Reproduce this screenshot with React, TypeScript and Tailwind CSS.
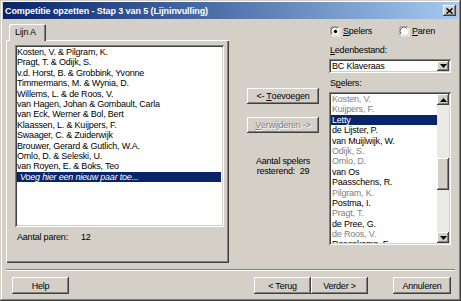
import React from "react";

const raised =
  "shadow-[inset_-1px_-1px_#404040,inset_1px_1px_#ffffff,inset_-2px_-2px_#808080,inset_2px_2px_#d4d0c8]";
const sunken =
  "shadow-[inset_1px_1px_#808080,inset_-1px_-1px_#ffffff,inset_2px_2px_#404040,inset_-2px_-2px_#d4d0c8]";

function Radio({ checked }: { checked: boolean }) {
  return (
    <svg width="11" height="11" viewBox="0 0 12 12" className="shrink-0">
      <circle cx="6" cy="6" r="5.5" fill="#ffffff" />
      <path d="M1.2 9.5 A5.5 5.5 0 0 1 9.5 1.2" stroke="#808080" strokeWidth="1" fill="none" />
      <path d="M2.4 8.6 A4.3 4.3 0 0 1 8.6 2.4" stroke="#404040" strokeWidth="1" fill="none" />
      <path d="M10.8 2.5 A5.5 5.5 0 0 1 2.5 10.8" stroke="#ffffff" strokeWidth="1" fill="none" />
      <path d="M9.6 3.4 A4.3 4.3 0 0 1 3.4 9.6" stroke="#d4d0c8" strokeWidth="1" fill="none" />
      {checked && <circle cx="6" cy="6" r="1.8" fill="#000000" />}
    </svg>
  );
}

function Btn({ children, className = "", disabled = false }: { children: React.ReactNode; className?: string; disabled?: boolean }) {
  return (
    <div
      className={`${raised} bg-[#d4d0c8] flex items-center justify-center ${
        disabled ? "text-[#808080] [text-shadow:1px_1px_0_#ffffff]" : "text-black"
      } ${className}`}
    >
      {children}
    </div>
  );
}

const pairs = [
  "Kosten, V. & Pilgram, K.",
  "Pragt, T. & Odijk, S.",
  "v.d. Horst, B. & Grobbink, Yvonne",
  "Timmermans, M. & Wynia, D.",
  "Willems, L. & de Roos, V.",
  "van Hagen, Johan & Gombault, Carla",
  "van Eck, Werner & Bol, Bert",
  "Klaassen, L. & Kuijpers, F.",
  "Swaager, C. & Zuiderwijk",
  "Brouwer, Gerard & Gutlich, W.A.",
  "Omlo, D. & Seleski, U.",
  "van Royen, E. & Boks, Teo",
];

const players: { n: string; g?: boolean; sel?: boolean }[] = [
  { n: "Kosten, V.", g: true },
  { n: "Kuijpers, F.", g: true },
  { n: "Letty", sel: true },
  { n: "de Lijster, P." },
  { n: "van Muijlwijk, W." },
  { n: "Odijk, S.", g: true },
  { n: "Omlo, D.", g: true },
  { n: "van Os" },
  { n: "Paasschens, R." },
  { n: "Pilgram, K.", g: true },
  { n: "Postma, I." },
  { n: "Pragt, T.", g: true },
  { n: "de Pree, G." },
  { n: "de Roos, V.", g: true },
  { n: "Rosenkamp, F." },
];

function Arrow({ up }: { up: boolean }) {
  return (
    <svg width="7" height="4" viewBox="0 0 7 4">
      {up ? <path d="M3.5 0 L7 4 L0 4 Z" fill="#000" /> : <path d="M0 0 L7 0 L3.5 4 Z" fill="#000" />}
    </svg>
  );
}

export default function App() {
  return (
    <div className="w-[461px] h-[301px] bg-[#d4d0c8] p-[2px] flex flex-col overflow-hidden text-[9px] leading-[10px] tracking-[-0.2px] text-black font-['Liberation_Sans',Arial,sans-serif] shadow-[inset_-1px_-1px_#404040,inset_1px_1px_#d4d0c8,inset_-2px_-2px_#808080,inset_2px_2px_#ffffff]">
      {/* Title bar */}
      <div className="h-[17px] mx-[1px] flex items-center justify-between bg-linear-to-r from-[#0a246a] to-[#a6caf0] pl-[2px] pr-[2px] shrink-0">
        <span className="text-white font-bold text-[9px] tracking-[-0.1px]">
          Competitie opzetten - Stap 3 van 5 (Lijninvulling)
        </span>
        <div className={`${raised} bg-[#d4d0c8] w-[13px] h-[11px] flex items-center justify-center`}>
          <svg width="7" height="6" viewBox="0 0 7 6">
            <path d="M0.5 0.5 L6.5 5.5 M6.5 0.5 L0.5 5.5" stroke="#000" strokeWidth="1.5" />
          </svg>
        </div>
      </div>

      {/* Main */}
      <div className="flex mt-[5px] h-[239px] shrink-0">
        {/* Left column */}
        <div className="ml-[4px] w-[223px] flex flex-col">
          <div className="h-[16px] flex">
            <div className="relative z-10 ml-[3px] w-[37px] h-[17px] bg-[#d4d0c8] rounded-t-[2px] shadow-[inset_1px_1px_#ffffff,inset_-1px_0_#404040,inset_-2px_0_#808080] flex items-center pl-[6px] pb-[1px]">
              Lijn A
            </div>
          </div>
          <div className="h-[223px] bg-[#d4d0c8] shadow-[inset_1px_1px_#ffffff,inset_-1px_-1px_#404040,inset_-2px_-2px_#808080] flex flex-col">
            <div className={`${sunken} bg-white ml-[9px] mt-[5px] w-[209px] h-[182px] p-[2px] flex flex-col`}>
              {pairs.map((p) => (
                <div key={p} className="h-[10.4px] leading-[10.4px] whitespace-nowrap pl-[0px]">
                  {p}
                </div>
              ))}
              <div className="h-[10.4px] leading-[10.4px] mr-[1px] bg-[#0a246a] text-white italic pl-[3px] whitespace-nowrap">
                Voeg hier een nieuw paar toe...
              </div>
            </div>
            <div className="mt-[5px] ml-[11px] h-[10px] flex items-center">
              <span className="w-[64px]">Aantal paren:</span>
              <span>12</span>
            </div>
          </div>
        </div>

        {/* Middle column */}
        <div className="ml-[18px] w-[72px] flex flex-col">
          <Btn className="mt-[64px] h-[16px]">
            &lt;- <span className="underline ml-[2px]">T</span>oevoegen
          </Btn>
          <Btn className="mt-[13px] h-[16px]" disabled>
            <span className="underline">V</span>erwijderen -&gt;
          </Btn>
          <div className="mt-[23px] flex flex-col items-center text-center">
            <div className="h-[10px]">Aantal spelers</div>
            <div className="h-[10px]">
              resterend:&nbsp;&nbsp;29
            </div>
          </div>
        </div>

        {/* Right column */}
        <div className="ml-[10px] w-[122px] flex flex-col">
          <div className="mt-[2px] h-[10px] flex items-center">
            <div className="ml-[1px] w-[69px] flex items-center gap-[2px]">
              <Radio checked />
              <span>
                <span className="underline">S</span>pelers
              </span>
            </div>
            <div className="flex items-center gap-[2px]">
              <Radio checked={false} />
              <span>
                <span className="underline">P</span>aren
              </span>
            </div>
          </div>
          <div className="mt-[9px] h-[10px] pl-[1px]">
            <span className="underline">L</span>edenbestand:
          </div>
          <div className={`${sunken} bg-white mt-[4px] h-[14px] p-[2px] flex items-center`}>
            <div className="flex-1 pl-[1px] leading-[10px]">BC Klaveraas</div>
            <div className={`${raised} bg-[#d4d0c8] w-[12px] h-[10px] flex items-center justify-center`}>
              <Arrow up={false} />
            </div>
          </div>
          <div className="mt-[5px] h-[10px] pl-[1px]">
            S<span className="underline">p</span>elers:
          </div>
          <div className={`${sunken} bg-white mt-[4px] h-[153px] p-[2px] flex`}>
            <div className="flex-1 flex flex-col overflow-hidden">
              {players.map((p) => (
                <div
                  key={p.n}
                  className={`h-[10.4px] leading-[10.4px] shrink-0 whitespace-nowrap pl-[1px] ${
                    p.sel ? "bg-[#0a246a] text-white" : p.g ? "text-[#808080]" : "text-black"
                  }`}
                >
                  {p.n}
                </div>
              ))}
            </div>
            <div className="w-[12px] flex flex-col bg-[#ebe9e4]">
              <div className={`${raised} bg-[#d4d0c8] h-[11px] flex items-center justify-center`}>
                <Arrow up />
              </div>
              <div className="flex-1 flex flex-col">
                <div className={`${raised} bg-[#d4d0c8] mt-[53px] h-[32px]`} />
              </div>
              <div className={`${raised} bg-[#d4d0c8] h-[11px] flex items-center justify-center`}>
                <Arrow up={false} />
              </div>
            </div>
          </div>
        </div>
      </div>

      {/* Separator */}
      <div className="mt-[6px] mx-[4px] h-[2px] border-t border-t-[#808080] border-b border-b-white shrink-0" />

      {/* Buttons */}
      <div className="mt-[6px] h-[17px] flex shrink-0">
        <Btn className="ml-[10px] w-[57px] h-[17px]">Help</Btn>
        <div className="flex-1" />
        <Btn className="w-[57px] h-[17px]">&lt; Terug</Btn>
        <Btn className="w-[57px] h-[17px]">Verder &gt;</Btn>
        <Btn className="ml-[25px] mr-[8px] w-[58px] h-[17px]">Annuleren</Btn>
      </div>
    </div>
  );
}
